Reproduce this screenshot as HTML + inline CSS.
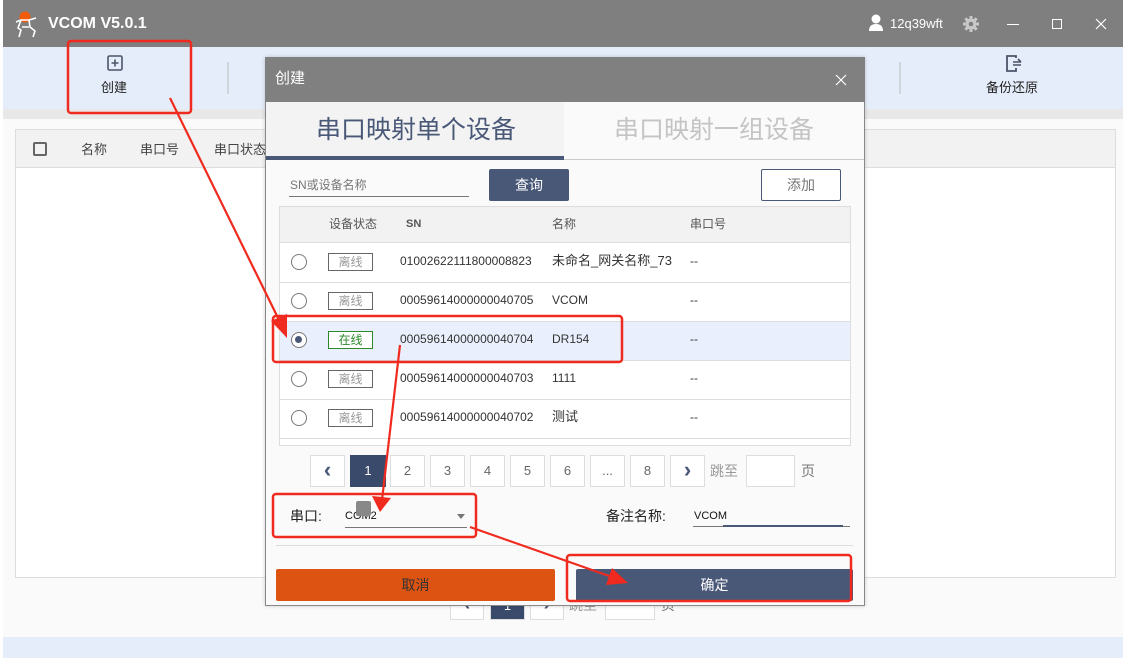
<!DOCTYPE html>
<html><head><meta charset="utf-8">
<style>
*{margin:0;padding:0;box-sizing:border-box}
body{width:1129px;height:658px;position:relative;overflow:hidden;background:#fff;font-family:"Liberation Sans","Noto Sans CJK SC",sans-serif;color:#333}
.a{position:absolute}
.t{position:absolute;white-space:nowrap;line-height:16px}
.pg{position:absolute;border:1px solid #ddd;background:#fff;text-align:center;font-size:13px;color:#666;line-height:30px}
</style></head><body>
<div class="a" style="left:3px;top:0;width:1120px;height:47px;background:#7f7f7f"></div>
<svg class="a" style="left:12px;top:10px" width="30" height="30" viewBox="0 0 30 30">
<circle cx="13" cy="7" r="5.5" fill="#f25a0c"/>
<path d="M4 12 L9 10 L17 10 L24 8 M9 10 L6 18 L9 20 L7 27 M17 10 L18 17 L23 21 L21 27 M10 17 L17 17" fill="none" stroke="#fff" stroke-width="1.6" stroke-linejoin="round"/>
</svg>
<div class="t" style="left:48px;top:15px;color:#fff;font-size:16px;font-weight:bold;line-height:18px">VCOM V5.0.1</div>
<svg class="a" style="left:868px;top:14px" width="16" height="18"><circle cx="8" cy="5" r="4.5" fill="#fff"/><path d="M1 17 Q1 10 8 10 Q15 10 15 17Z" fill="#fff"/></svg>
<div class="t" style="left:890px;top:16px;color:#fff;font-size:13px">12q39wft</div>
<svg class="a" style="left:962px;top:15px" width="18" height="18" viewBox="0 0 18 18"><g fill="#c8c8c8"><rect x="7.5" y="1" width="3" height="16"/><rect x="1" y="7.5" width="16" height="3"/><rect x="7.5" y="1" width="3" height="16" transform="rotate(45 9 9)"/><rect x="7.5" y="1" width="3" height="16" transform="rotate(-45 9 9)"/><circle cx="9" cy="9" r="5.5"/></g><circle cx="9" cy="9" r="2.3" fill="#7f7f7f"/></svg>
<div class="a" style="left:1007px;top:24px;width:12px;height:1px;background:#fff"></div>
<div class="a" style="left:1052px;top:19px;width:10px;height:10px;border:1px solid #fff"></div>
<svg class="a" style="left:1095px;top:18px" width="12" height="12"><path d="M1 1L11 11M11 1L1 11" stroke="#fff" stroke-width="1.2"/></svg>
<div class="a" style="left:3px;top:47px;width:1120px;height:62px;background:#e6edfa"></div>
<svg class="a" style="left:107px;top:55px" width="16" height="16"><rect x="1" y="1" width="14" height="14" rx="1.5" fill="none" stroke="#4a5568" stroke-width="1.6"/><path d="M8 4.5V11.5M4.5 8H11.5" stroke="#4a5568" stroke-width="1.6"/></svg>
<div class="t" style="left:101px;top:80px;font-size:13px;color:#222">创建</div>
<div class="a" style="left:227px;top:62px;width:2px;height:32px;background:#d0d4dc"></div>
<div class="a" style="left:899px;top:62px;width:2px;height:32px;background:#d0d4dc"></div>
<svg class="a" style="left:1005px;top:54px" width="18" height="18"><path d="M11 4V2H2V17H11V14" fill="none" stroke="#4a5568" stroke-width="1.8"/><path d="M8 8H16M8 11H16M13 5L16 8" fill="none" stroke="#4a5568" stroke-width="1.6"/></svg>
<div class="t" style="left:986px;top:80px;font-size:13px;color:#222">备份还原</div>
<div class="a" style="left:3px;top:109px;width:1120px;height:10px;background:#e8e8e8"></div>
<div class="a" style="left:3px;top:119px;width:1120px;height:518px;background:#fafafa"></div>
<div class="a" style="left:15px;top:129px;width:1101px;height:449px;border:1px solid #ddd;background:#fff"></div>
<div class="a" style="left:16px;top:130px;width:1099px;height:38px;background:#f2f2f2;border-bottom:1px solid #ddd"></div>
<div class="a" style="left:33px;top:142px;width:14px;height:14px;border:2px solid #666;border-radius:2px"></div>
<div class="t" style="left:81px;top:142px;font-size:13px;color:#444">名称</div>
<div class="t" style="left:140px;top:142px;font-size:13px;color:#444">串口号</div>
<div class="t" style="left:214px;top:142px;font-size:13px;color:#444">串口状态</div>
<div class="pg" style="left:450px;top:590px;width:34px;height:30px;color:#4a5878;font-size:20px;font-weight:bold;line-height:26px">‹</div>
<div class="pg" style="left:490px;top:590px;width:35px;height:30px;background:#3a4a6b;color:#fff">1</div>
<div class="pg" style="left:530px;top:590px;width:34px;height:30px;color:#4a5878;font-size:20px;font-weight:bold;line-height:26px">›</div>
<div class="t" style="left:569px;top:597px;font-size:14px;color:#999">跳至</div>
<div class="pg" style="left:605px;top:590px;width:50px;height:30px"></div>
<div class="t" style="left:661px;top:597px;font-size:14px;color:#777">页</div>
<div class="a" style="left:3px;top:637px;width:1120px;height:21px;background:#e6edfa"></div>
<!-- dialog -->
<div class="a" style="left:265px;top:57px;width:600px;height:549px;background:#fafafa;border:1px solid #888;box-shadow:0 0 4px rgba(0,0,0,.2)"></div>
<div class="a" style="left:265px;top:57px;width:600px;height:45px;background:#808080"></div>
<div class="t" style="left:275px;top:70px;color:#fff;font-size:15px;line-height:18px">创建</div>
<svg class="a" style="left:835px;top:74px" width="12" height="12"><path d="M1 1L11 11M11 1L1 11" stroke="#fff" stroke-width="1.2"/></svg>
<div class="a" style="left:266px;top:102px;width:298px;height:58px;background:#f3f3f3;border-bottom:4px solid #4a5878"></div>
<div class="a" style="left:564px;top:159px;width:300px;height:1px;background:#ccc"></div>
<div class="t" style="left:316px;top:115px;font-size:25px;color:#4a5878;line-height:30px">串口映射单个设备</div>
<div class="t" style="left:614px;top:115px;font-size:25px;color:#c4c4c4;line-height:30px">串口映射一组设备</div>
<div class="t" style="left:290px;top:177px;font-size:12px;color:#777">SN或设备名称</div>
<div class="a" style="left:289px;top:196px;width:180px;height:1px;background:#777"></div>
<div class="a" style="left:489px;top:169px;width:80px;height:32px;background:#4a5878;border-radius:2px;color:#fff;font-size:14px;text-align:center;line-height:32px">查询</div>
<div class="a" style="left:761px;top:169px;width:80px;height:32px;border:1px solid #4a5878;border-radius:2px;color:#777;font-size:14px;text-align:center;line-height:30px;background:#fff">添加</div>
<div class="a" style="left:279px;top:206px;width:572px;height:240px;border:1px solid #ddd;background:#fff"></div>
<div class="a" style="left:280px;top:207px;width:570px;height:36px;background:#f2f2f2;border-bottom:1px solid #ddd"></div>
<div class="t" style="left:329px;top:216px;font-size:12px;color:#555">设备状态</div>
<div class="t" style="left:406px;top:216px;font-size:11px;color:#555;font-weight:bold">SN</div>
<div class="t" style="left:552px;top:216px;font-size:12px;color:#555">名称</div>
<div class="t" style="left:690px;top:216px;font-size:12px;color:#555">串口号</div>
<div class="a" style="left:280px;top:321px;width:570px;height:39px;background:#e9effc"></div>
<div class="a" style="left:280px;top:282px;width:570px;height:1px;background:#ddd"></div>
<div class="a" style="left:280px;top:321px;width:570px;height:1px;background:#ddd"></div>
<div class="a" style="left:280px;top:360px;width:570px;height:1px;background:#ddd"></div>
<div class="a" style="left:280px;top:399px;width:570px;height:1px;background:#ddd"></div>
<div class="a" style="left:280px;top:438px;width:570px;height:1px;background:#ddd"></div>

<div class="a" style="left:291px;top:254px;width:16px;height:16px;border:1.5px solid #777;border-radius:50%"></div>
<div class="a" style="left:328px;top:253px;width:45px;height:18px;border:1px solid #666;font-size:12px;color:#999;text-align:center;line-height:16px">离线</div>
<div class="t" style="left:400px;top:253px;font-size:12px">01002622111800008823</div>
<div class="t" style="left:552px;top:253px;font-size:13px">未命名_网关名称_73</div>
<div class="t" style="left:690px;top:253px;font-size:12px">--</div>

<div class="a" style="left:291px;top:293px;width:16px;height:16px;border:1.5px solid #777;border-radius:50%"></div>
<div class="a" style="left:328px;top:292px;width:45px;height:18px;border:1px solid #666;font-size:12px;color:#999;text-align:center;line-height:16px">离线</div>
<div class="t" style="left:400px;top:292px;font-size:12px">00059614000000040705</div>
<div class="t" style="left:552px;top:292px;font-size:12px">VCOM</div>
<div class="t" style="left:690px;top:292px;font-size:12px">--</div>

<div class="a" style="left:291px;top:332px;width:16px;height:16px;border:1.5px solid #777;border-radius:50%;background:#fff"><div class="a" style="left:3px;top:3px;width:7px;height:7px;border-radius:50%;background:#4a5878"></div></div>
<div class="a" style="left:328px;top:331px;width:45px;height:18px;border:1px solid #2a8a2a;font-size:12px;color:#2a8a2a;text-align:center;line-height:16px;background:#fff">在线</div>
<div class="t" style="left:400px;top:331px;font-size:12px">00059614000000040704</div>
<div class="t" style="left:552px;top:331px;font-size:12px">DR154</div>
<div class="t" style="left:690px;top:331px;font-size:12px">--</div>

<div class="a" style="left:291px;top:371px;width:16px;height:16px;border:1.5px solid #777;border-radius:50%"></div>
<div class="a" style="left:328px;top:370px;width:45px;height:18px;border:1px solid #666;font-size:12px;color:#999;text-align:center;line-height:16px">离线</div>
<div class="t" style="left:400px;top:370px;font-size:12px">00059614000000040703</div>
<div class="t" style="left:552px;top:370px;font-size:12px">1111</div>
<div class="t" style="left:690px;top:370px;font-size:12px">--</div>

<div class="a" style="left:291px;top:410px;width:16px;height:16px;border:1.5px solid #777;border-radius:50%"></div>
<div class="a" style="left:328px;top:409px;width:45px;height:18px;border:1px solid #666;font-size:12px;color:#999;text-align:center;line-height:16px">离线</div>
<div class="t" style="left:400px;top:409px;font-size:12px">00059614000000040702</div>
<div class="t" style="left:552px;top:409px;font-size:13px">测试</div>
<div class="t" style="left:690px;top:409px;font-size:12px">--</div>

<div class="pg" style="left:310px;top:455px;width:35px;height:32px;color:#4a5878;font-size:22px;font-weight:bold;line-height:28px">‹</div>
<div class="pg" style="left:350px;top:455px;width:36px;height:32px;background:#3a4a6b;color:#fff;border-color:#3a4a6b">1</div>
<div class="pg" style="left:390px;top:455px;width:35px;height:32px">2</div>
<div class="pg" style="left:430px;top:455px;width:35px;height:32px">3</div>
<div class="pg" style="left:470px;top:455px;width:35px;height:32px">4</div>
<div class="pg" style="left:510px;top:455px;width:35px;height:32px">5</div>
<div class="pg" style="left:550px;top:455px;width:35px;height:32px">6</div>
<div class="pg" style="left:590px;top:455px;width:35px;height:32px">...</div>
<div class="pg" style="left:630px;top:455px;width:35px;height:32px">8</div>
<div class="pg" style="left:670px;top:455px;width:35px;height:32px;color:#4a5878;font-size:22px;font-weight:bold;line-height:28px">›</div>
<div class="t" style="left:710px;top:463px;font-size:14px;color:#999">跳至</div>
<div class="pg" style="left:746px;top:455px;width:49px;height:32px"></div>
<div class="t" style="left:801px;top:463px;font-size:14px;color:#777">页</div>

<div class="t" style="left:290px;top:508px;font-size:14px;color:#222">串口:</div>
<div class="t" style="left:345px;top:508px;font-size:11px;color:#111">COM2</div>
<div class="a" style="left:356px;top:501px;width:15px;height:15px;background:#888;border-radius:2px"></div>
<div class="a" style="left:457px;top:514px;width:0;height:0;border-left:4px solid transparent;border-right:4px solid transparent;border-top:5px solid #777"></div>
<div class="a" style="left:345px;top:527px;width:122px;height:1px;background:#777"></div>
<div class="t" style="left:606px;top:508px;font-size:14px;color:#222">备注名称:</div>
<div class="t" style="left:694px;top:508px;font-size:11px;color:#111">VCOM</div>
<div class="a" style="left:693px;top:526px;width:157px;height:1px;background:#777"></div>
<div class="a" style="left:723px;top:525px;width:120px;height:2px;background:#4a5878"></div>
<div class="a" style="left:276px;top:545px;width:577px;height:1px;background:#ddd"></div>
<div class="a" style="left:276px;top:569px;width:279px;height:32px;background:#dc5312;border-radius:2px;color:#333;font-size:14px;text-align:center;line-height:32px">取消</div>
<div class="a" style="left:576px;top:569px;width:277px;height:32px;background:#4a5878;border-radius:2px;color:#fff;font-size:14px;text-align:center;line-height:32px">确定</div>
<svg class="a" style="left:0;top:0" width="1129" height="658">
<g fill="none" stroke="#f02a1e" stroke-width="2.5">
<rect x="68" y="41" width="123" height="72" rx="3"/>
<rect x="273" y="316" width="349" height="46" rx="3"/>
<rect x="273" y="494" width="203" height="43" rx="3"/>
<rect x="567" y="555" width="284" height="46" rx="3"/>
</g>
<g stroke="#f02a1e" fill="none" stroke-width="2.2">
<path d="M170 98 L280 322"/>
<path d="M400 345 L382 500"/>
<path d="M470 527 L612 577"/>
</g>
<g fill="#f02a1e">
<path d="M287 338 L271 321 L287 314Z"/>
<path d="M380 512 L372 496 L391 498Z"/>
<path d="M628 583 L606 585 L612 568Z"/>
</g>
</svg>
</body></html>
